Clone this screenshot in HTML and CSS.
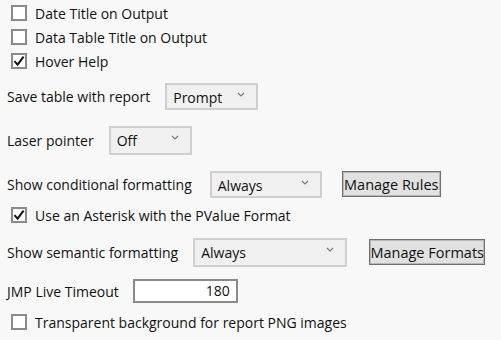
FILE: index.html
```html
<!DOCTYPE html>
<html lang="en">
<head>
    <meta charset="UTF-8">
    <title>Preferences</title>
    <link rel="stylesheet" href="styles.css">
</head>
<body>
    <div class="prefs">

        <!-- Output titles -->
        <div class="row check-row r1">
            <span class="box"></span>
            <span class="label">Date Title on Output</span>
        </div>
        <div class="row check-row">
            <span class="box"></span>
            <span class="label">Data Table Title on Output</span>
        </div>
        <div class="row check-row">
            <span class="box checked"><svg viewBox="0 0 16 16" width="16" height="16"><path d="M3.5 8.2 L6.6 11.6 L12.6 3.6" fill="none" stroke="#111" stroke-width="2"/></svg></span>
            <span class="label">Hover Help</span>
        </div>

        <!-- Dropdowns -->
        <div class="row ctrl-row r4">
            <span class="label">Save table with report</span>
            <div class="select w-prompt">Prompt<svg class="caret" viewBox="0 0 8 5" width="8" height="5"><path d="M1 1 L4 4 L7 1" fill="none" stroke="#777" stroke-width="1.2"/></svg></div>
        </div>
        <div class="row ctrl-row r5">
            <span class="label">Laser pointer</span>
            <div class="select w-off tall">Off<svg class="caret" viewBox="0 0 8 5" width="8" height="5"><path d="M1 1 L4 4 L7 1" fill="none" stroke="#777" stroke-width="1.2"/></svg></div>
        </div>
        <div class="row ctrl-row r5">
            <span class="label wide-gap">Show conditional formatting</span>
            <div class="select w-always">Always<svg class="caret" viewBox="0 0 8 5" width="8" height="5"><path d="M1 1 L4 4 L7 1" fill="none" stroke="#777" stroke-width="1.2"/></svg></div>
            <button class="btn w-rules">Manage Rules</button>
        </div>

        <div class="row check-row r7">
            <span class="box checked"><svg viewBox="0 0 16 16" width="16" height="16"><path d="M3.5 8.2 L6.6 11.6 L12.6 3.6" fill="none" stroke="#111" stroke-width="2"/></svg></span>
            <span class="label">Use an Asterisk with the PValue Format</span>
        </div>

        <div class="row ctrl-row r8">
            <span class="label">Show semantic formatting</span>
            <div class="select w-always2 tall">Always<svg class="caret" viewBox="0 0 8 5" width="8" height="5"><path d="M1 1 L4 4 L7 1" fill="none" stroke="#777" stroke-width="1.2"/></svg></div>
            <button class="btn w-formats">Manage Formats</button>
        </div>

        <div class="row ctrl-row r9">
            <span class="label narrow-gap">JMP Live Timeout</span>
            <div class="num-field">180</div>
        </div>

        <div class="row check-row r7">
            <span class="box"></span>
            <span class="label">Transparent background for report PNG images</span>
        </div>

    </div>
</body>
</html>
```

FILE: styles.css
```css
body {
    margin: 0;
    background-color: #f8f8f8;
    font-family: "Open Sans", "Noto Sans", sans-serif;
    font-size: 14px;
    color: #111;
}
.prefs {
    display: flex;
    flex-direction: column;
    padding: 1px 0 0 7px;
}
.row {
    display: flex;
    align-items: center;
}
/* Checkbox rows */
.check-row {
    height: 24px;
    padding-left: 4px;
}
.box {
    width: 16px;
    height: 16px;
    box-sizing: border-box;
    border: 2px solid #8a8a8a;
    background: white;
    margin-right: 8px;
    display: flex;
    align-items: center;
    justify-content: center;
}
.box svg {
    flex: none;
}
/* Control rows */
.ctrl-row {
    height: 30px;
}
.r4 { margin-top: 8px; }
.r5 { margin-top: 14px; }
.r7 { margin-top: 4px; }
.r8 { margin-top: 10px; }
.r9 { margin-top: 9px; }
.ctrl-row .label {
    margin-right: 15px;
}
.ctrl-row .wide-gap {
    margin-right: 18px;
}
.ctrl-row .narrow-gap {
    margin-right: 14px;
}
.select {
    position: relative;
    box-sizing: border-box;
    height: 27px;
    border: 2px solid #cfcfcf;
    background: #f0f0f0;
    padding: 4px 0 0 6px;
    line-height: 18px;
}
.select.tall {
    height: 29px;
}
.caret {
    position: absolute;
    right: 11px;
    top: 7px;
}
.w-prompt { width: 93px; }
.w-off { width: 83px; }
.w-always { width: 112px; }
.w-always2 { width: 154px; }
.btn {
    box-sizing: border-box;
    height: 26px;
    margin-left: 20px;
    border: 1px solid #707070;
    box-shadow: inset 0 0 0 1px #b8b8b8;
    background: #e1e1e1;
    font-family: inherit;
    font-size: 14.5px;
    color: #111;
    padding: 0;
}
.w-rules { width: 99px; }
.w-formats { width: 116px; margin-left: 22px; }
.num-field {
    box-sizing: border-box;
    width: 105px;
    height: 24px;
    border: 2px solid #8a8a8a;
    background: white;
    text-align: right;
    padding-right: 6px;
    line-height: 20px;
}
```
